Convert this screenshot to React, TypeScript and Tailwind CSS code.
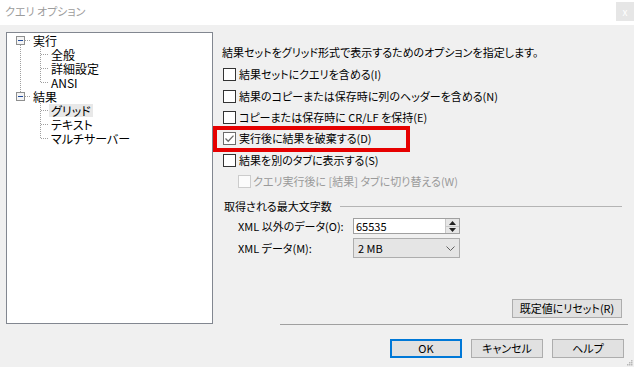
import clsx from "clsx";

const font = "font-['Noto_Sans_CJK_JP',sans-serif] [font-feature-settings:'palt']";

function CheckBox({ checked = false, disabled = false }: { checked?: boolean; disabled?: boolean }) {
  return (
    <span
      className={clsx(
        "inline-flex h-[13px] w-[13px] shrink-0 items-center justify-center border",
        disabled ? "border-[#cccccc] bg-[#fbfbfb]" : checked ? "border-[#6b6b6b] bg-white" : "border-[#333333] bg-white",
      )}
    >
      {checked && (
        <svg width="11" height="11" viewBox="0 0 11 11">
          <path d="M1.5 5.5 L4.2 8.2 L9.5 2.6" fill="none" stroke="#6b6b6b" strokeWidth="1.3" />
        </svg>
      )}
    </span>
  );
}

function OptionRow({ label, checked, disabled, indent, marked }: { label: string; checked?: boolean; disabled?: boolean; indent?: boolean; marked?: boolean }) {
  return (
    <div className={clsx("relative flex h-[21.4px] items-center", indent ? "ml-[16px] gap-[2px]" : "ml-px gap-[3px]")}>
      <CheckBox checked={checked} disabled={disabled} />
      <span className={clsx("whitespace-nowrap leading-[13px]", disabled ? "text-[#9a9a9a]" : "text-black")}>{label}</span>
      {marked && <div className="pointer-events-none absolute left-[-10px] top-[-2.5px] h-[26px] w-[197px] border-[4px] border-[#e60000]" />}
    </div>
  );
}

function TreeLines() {
  const dot = { stroke: "#a0a0a0", strokeWidth: 1, strokeDasharray: "1 1" };
  return (
    <svg className="absolute left-0 top-0" width="120" height="120" viewBox="0 0 120 120">
      <line x1="13.5" y1="12" x2="13.5" y2="59" {...dot} />
      <line x1="18" y1="7.5" x2="24" y2="7.5" {...dot} />
      <line x1="18" y1="63.5" x2="24" y2="63.5" {...dot} />
      <line x1="33.5" y1="14" x2="33.5" y2="50" {...dot} />
      <line x1="33.5" y1="70" x2="33.5" y2="106" {...dot} />
      {[21.5, 35.5, 49.5, 77.5, 91.5, 105.5].map((y) => (
        <line key={y} x1="34" y1={y} x2="42" y2={y} {...dot} />
      ))}
      {[3.5, 59.5].map((y) => (
        <g key={y}>
          <rect x="9.5" y={y} width="8" height="8" fill="#f4f4f4" stroke="#8e8f8f" />
          <line x1="11" y1={y + 4} x2="16" y2={y + 4} stroke="#1f4a9c" strokeWidth="1" />
        </g>
      ))}
    </svg>
  );
}

function OptionTree() {
  const rows: { text: string; level: number; selected?: boolean }[] = [
    { text: "実行", level: 0 },
    { text: "全般", level: 1 },
    { text: "詳細設定", level: 1 },
    { text: "ANSI", level: 1 },
    { text: "結果", level: 0 },
    { text: "グリッド", level: 1, selected: true },
    { text: "テキスト", level: 1 },
    { text: "マルチサーバー", level: 1 },
  ];
  return (
    <div className="relative ml-[6px] mt-[7px] h-[292px] w-[207px] border border-[#828790] bg-white">
      <TreeLines />
      <div className="relative flex flex-col">
        {rows.map((row) => (
          <div key={row.text} className={clsx("flex h-[14px] items-center", row.level === 0 ? "pl-[24px]" : "pl-[42px]")}>
            <span className={clsx("px-[2px] text-[12px] leading-[13px] text-black", row.selected && "bg-[#e8e8e8]")}>{row.text}</span>
          </div>
        ))}
      </div>
    </div>
  );
}

function Spinner() {
  return (
    <div className="flex h-full w-[14px] flex-col border-l border-[#c8c8c8] bg-[#e6e6e6]">
      <div className="flex flex-1 items-center justify-center border-b border-[#c8c8c8]">
        <svg width="7" height="4" viewBox="0 0 7 4">
          <path d="M0 4 L3.5 0 L7 4 Z" fill="#222" />
        </svg>
      </div>
      <div className="flex flex-1 items-center justify-center">
        <svg width="7" height="4" viewBox="0 0 7 4">
          <path d="M0 0 L3.5 4 L7 0 Z" fill="#222" />
        </svg>
      </div>
    </div>
  );
}

function WinButton({ label, primary, width }: { label: string; primary?: boolean; width: string }) {
  return (
    <button
      className={clsx(
        "flex h-[19px] items-center justify-center bg-[#e1e1e1] leading-[13px] text-black",
        width,
        primary ? "border-2 border-[#0078d7]" : "border border-[#adadad]",
      )}
    >
      {label}
    </button>
  );
}

export default function App() {
  return (
    <div className={clsx("relative flex h-[367px] w-[634px] flex-col overflow-hidden bg-[#f0f0f0] text-[11px]", font)}>
      <div className="flex h-[25px] shrink-0 items-start justify-between bg-white">
        <span className="mt-[4px] pl-[5px] leading-[14px] text-[#9c9c9c]">クエリ オプション</span>
        <div className="mt-[2px] flex h-[19px] w-[18px] items-center justify-center bg-[#e6e6e6] text-[10px] leading-none text-white">x</div>
      </div>

      <div className="flex h-[299px] shrink-0">
        <OptionTree />
        <div className="ml-[9px] mt-[7px] flex w-[400px] flex-col">
          <p className="mt-[13px] h-[14px] whitespace-nowrap leading-[14px] text-black">結果セットをグリッド形式で表示するためのオプションを指定します。</p>
          <div className="mt-[5px] flex flex-col">
            <OptionRow label="結果セットにクエリを含める(I)" />
            <OptionRow label="結果のコピーまたは保存時に列のヘッダーを含める(N)" />
            <OptionRow label="コピーまたは保存時に CR/LF を保持(E)" />
            <OptionRow label="実行後に結果を破棄する(D)" checked marked />
            <OptionRow label="結果を別のタブに表示する(S)" />
            <OptionRow label="クエリ実行後に [結果] タブに切り替える(W)" disabled indent />
          </div>

          <div className="mt-[7px] flex h-[14px] items-center gap-[8px]">
            <span className="ml-[2px] whitespace-nowrap leading-[14px] text-black">取得される最大文字数</span>
            <div className="h-px flex-1 bg-[#b4b4b4]" />
          </div>

          <div className="mt-[5px] flex h-[16px] items-center">
            <span className="ml-[16px] w-[115px] whitespace-nowrap leading-[14px] text-black">XML 以外のデータ(O):</span>
            <div className="flex h-[16px] w-[107px] items-stretch border border-[#a0a0a0] bg-white">
              <span className="flex-1 pl-[2px] leading-[14px] text-black">65535</span>
              <Spinner />
            </div>
          </div>

          <div className="mt-[4px] flex h-[20px] items-center">
            <span className="ml-[16px] w-[115px] whitespace-nowrap leading-[14px] text-black">XML データ(M):</span>
            <div className="flex h-[20px] w-[107px] items-center justify-between border border-[#adadad] bg-[#e5e5e5] pl-[4px] pr-[4px]">
              <span className="leading-[14px] text-black">2 MB</span>
              <svg width="9" height="5" viewBox="0 0 9 5">
                <path d="M0.5 0.5 L4.5 4.5 L8.5 0.5" fill="none" stroke="#606060" strokeWidth="1" />
              </svg>
            </div>
          </div>

          <div className="mt-[41px] flex justify-end">
            <WinButton label="既定値にリセット(R)" width="w-[110px]" />
          </div>
        </div>
      </div>

      <div className="ml-[280px] h-px w-[348px] shrink-0 bg-[#a0a0a0]" />

      <div className="mt-[14px] flex gap-[9px] pl-[390px]">
        <WinButton label="OK" primary width="w-[72px]" />
        <WinButton label="キャンセル" width="w-[72px]" />
        <WinButton label="ヘルプ" width="w-[72px]" />
      </div>

      <svg className="absolute bottom-[1px] right-[1px]" width="6" height="6" viewBox="0 0 6 6">
        {[
          [4, 0],
          [2, 2],
          [4, 2],
          [0, 4],
          [2, 4],
          [4, 4],
        ].map(([x, y]) => (
          <rect key={`${x}-${y}`} x={x} y={y} width="1.5" height="1.5" fill="#b8b8b8" />
        ))}
      </svg>
    </div>
  );
}
